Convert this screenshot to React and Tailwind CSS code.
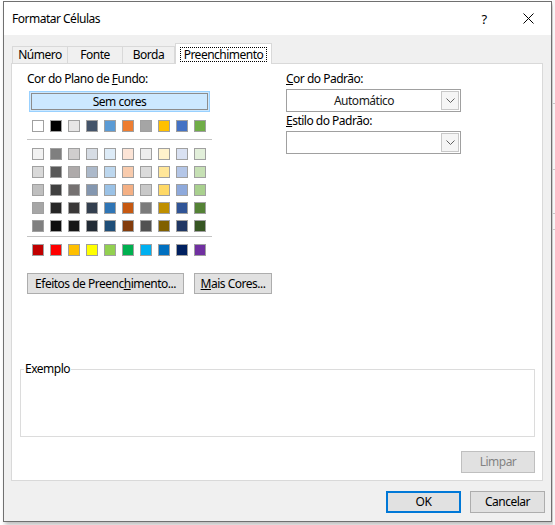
import React from 'react';

const themeRow = ['#ffffff', '#000000', '#e7e6e6', '#44546a', '#5b9bd5', '#ed7d31', '#a5a5a5', '#ffc000', '#4472c4', '#70ad47'];

const tintRows = [
    ['#f2f2f2', '#7f7f7f', '#d0cece', '#d6dce4', '#ddebf7', '#fce4d6', '#ededed', '#fff2cc', '#d9e1f2', '#e2efda'],
    ['#d9d9d9', '#595959', '#aeaaaa', '#acb9ca', '#bdd7ee', '#f8cbad', '#dbdbdb', '#ffe699', '#b4c6e7', '#c6e0b4'],
    ['#bfbfbf', '#404040', '#757171', '#8497b0', '#9bc2e6', '#f4b084', '#c9c9c9', '#ffd966', '#8ea9db', '#a9d08e'],
    ['#a6a6a6', '#262626', '#3a3838', '#333f4f', '#2f75b5', '#c65911', '#7b7b7b', '#bf8f00', '#305496', '#548235'],
    ['#808080', '#0d0d0d', '#161616', '#222b35', '#1f4e78', '#833c0c', '#525252', '#806000', '#203764', '#375623'],
];

const standardRow = ['#c00000', '#ff0000', '#ffc000', '#ffff00', '#92d050', '#00b050', '#00b0f0', '#0070c0', '#002060', '#7030a0'];

function SwatchRow({ cores }) {
    return (
        <div className="flex gap-[6px]">
            {cores.map((cor, i) => (
                <div key={i} className="w-[12px] h-[12px] border border-[#a0a0a0]" style={{ backgroundColor: cor }} />
            ))}
        </div>
    );
}

function Chevron() {
    return (
        <svg width="9" height="6" viewBox="0 0 9 6">
            <polyline points="0.5,0.5 4.5,4.5 8.5,0.5" fill="none" stroke="#606060" strokeWidth="1" />
        </svg>
    );
}

function Select({ value }) {
    return (
        <div className="w-[175px] h-[23px] border border-[#a0a0a0] bg-white flex">
            <div className="flex-1 flex items-center justify-center text-[#1a1a1a]">{value}</div>
            <div className="w-[18px] my-[1px] mr-[1px] border border-[#c8c8c8] bg-[#f5f5f5] flex items-center justify-center">
                <Chevron />
            </div>
        </div>
    );
}

export default function App() {
    return (
        <div
            className="w-[555px] h-[525px] bg-white overflow-hidden flex text-[12px] leading-[16px] tracking-[-0.5px] whitespace-nowrap text-black"
            style={{ fontFamily: '"Noto Sans", "Open Sans", sans-serif' }}
        >
            <div className="ml-[3px] mt-[1px] w-[549px] h-[521px] border border-[#707070] bg-[#f0f0f0] flex flex-col shadow-[2px_3px_4px_rgba(0,0,0,0.25)]">
                {/* barra de título */}
                <div className="h-[33px] bg-white flex items-center pl-[8px]">
                    <span className="flex-1">Formatar Células</span>
                    <span className="w-[20px] text-center mr-[29px] text-[13px]">?</span>
                    <svg width="11" height="11" viewBox="0 0 11 11" className="mr-[17px]">
                        <path d="M0.5 0.5 L10.5 10.5 M10.5 0.5 L0.5 10.5" stroke="#000" strokeWidth="1" />
                    </svg>
                </div>

                {/* abas */}
                <div className="pt-[8px] pl-[8px] flex items-end h-[28px]">
                    <div className="h-[17px] w-[56px] border border-b-0 border-[#d9d9d9] flex items-center justify-center">Número</div>
                    <div className="h-[17px] w-[55px] border border-b-0 border-l-0 border-[#d9d9d9] flex items-center justify-center">Fonte</div>
                    <div className="h-[17px] w-[52px] border border-b-0 border-l-0 border-[#d9d9d9] flex items-center justify-center">Borda</div>
                    <div className="relative z-10 -mb-px h-[21px] w-[97px] border border-b-0 border-[#d9d9d9] bg-white flex items-center justify-center">
                        <span className="border border-dotted border-black px-[3px] leading-[13px]">Preenchimento</span>
                    </div>
                </div>

                {/* painel */}
                <div className="ml-[7px] mr-[8px] h-[418px] border border-[#d9d9d9] bg-white flex flex-col">
                    <div className="flex pt-[7px]">
                        {/* cor de fundo */}
                        <div className="pl-[15px] w-[274px] flex flex-col">
                            <div>Cor do Plano de <span className="underline">F</span>undo:</div>
                            <div className="mt-[4px] ml-[2px] w-[181px] h-[21px] border border-[#99d1ff] bg-[#cce8ff] p-[1px]">
                                <div className="h-full border border-[#8c8c8c] flex items-center justify-center">Sem cores</div>
                            </div>
                            <div className="mt-[8px] ml-[5px]">
                                <SwatchRow cores={themeRow} />
                            </div>
                            <div className="mt-[7px] w-[185px] h-px bg-[#c4c4c4]" />
                            <div className="mt-[8px] ml-[5px] flex flex-col gap-[6px]">
                                {tintRows.map((row, i) => (
                                    <SwatchRow key={i} cores={row} />
                                ))}
                            </div>
                            <div className="mt-[4px] w-[185px] h-px bg-[#c4c4c4]" />
                            <div className="mt-[7px] ml-[5px]">
                                <SwatchRow cores={standardRow} />
                            </div>
                            <div className="mt-[17px] flex gap-[10px]">
                                <div className="w-[157px] h-[21px] border border-[#adadad] bg-[#e1e1e1] flex items-center justify-center">
                                    <span>Efeitos de Preenc<span className="underline">h</span>imento...</span>
                                </div>
                                <div className="w-[78px] h-[21px] border border-[#adadad] bg-[#e1e1e1] flex items-center justify-center">
                                    <span><span className="underline">M</span>ais Cores...</span>
                                </div>
                            </div>
                        </div>

                        {/* padrão */}
                        <div className="flex flex-col">
                            <div><span className="underline">C</span>or do Padrão:</div>
                            <div className="mt-[2px]">
                                <Select value="Automático" />
                            </div>
                            <div className="mt-[1px]"><span className="underline">E</span>stilo do Padrão:</div>
                            <div className="mt-[2px]">
                                <Select value="" />
                            </div>
                        </div>
                    </div>

                    {/* exemplo */}
                    <div className="mt-[75px] ml-[8px] w-[515px] h-[68px] border border-[#dcdcdc] relative">
                        <span className="absolute -top-[9px] left-[3px] bg-white px-px">Exemplo</span>
                    </div>

                    <div className="mt-[14px] flex justify-end pr-[7px]">
                        <div className="w-[74px] h-[22px] border border-[#bfbfbf] bg-[#e1e1e1] text-[#838383] flex items-center justify-center">Limpar</div>
                    </div>
                </div>

                {/* rodapé */}
                <div className="mt-[10px] flex justify-end gap-[9px] pr-[6px]">
                    <div className="w-[75px] h-[22px] border-2 border-[#0078d7] bg-[#e1e1e1] flex items-center justify-center">OK</div>
                    <div className="w-[75px] h-[22px] border border-[#adadad] bg-[#e1e1e1] flex items-center justify-center">Cancelar</div>
                </div>
            </div>
            <div className="flex-1 ml-[1px] bg-[#f7f7f7] flex flex-col">
                <div className="h-[104px] border-b border-[#c8c8c8]" />
                <div className="h-[66px] border-b border-[#c8c8c8]" />
                <div className="h-[44px] border-b border-[#c8c8c8]" />
                <div className="h-[16px] border-b border-[#c8c8c8]" />
            </div>
        </div>
    );
}
